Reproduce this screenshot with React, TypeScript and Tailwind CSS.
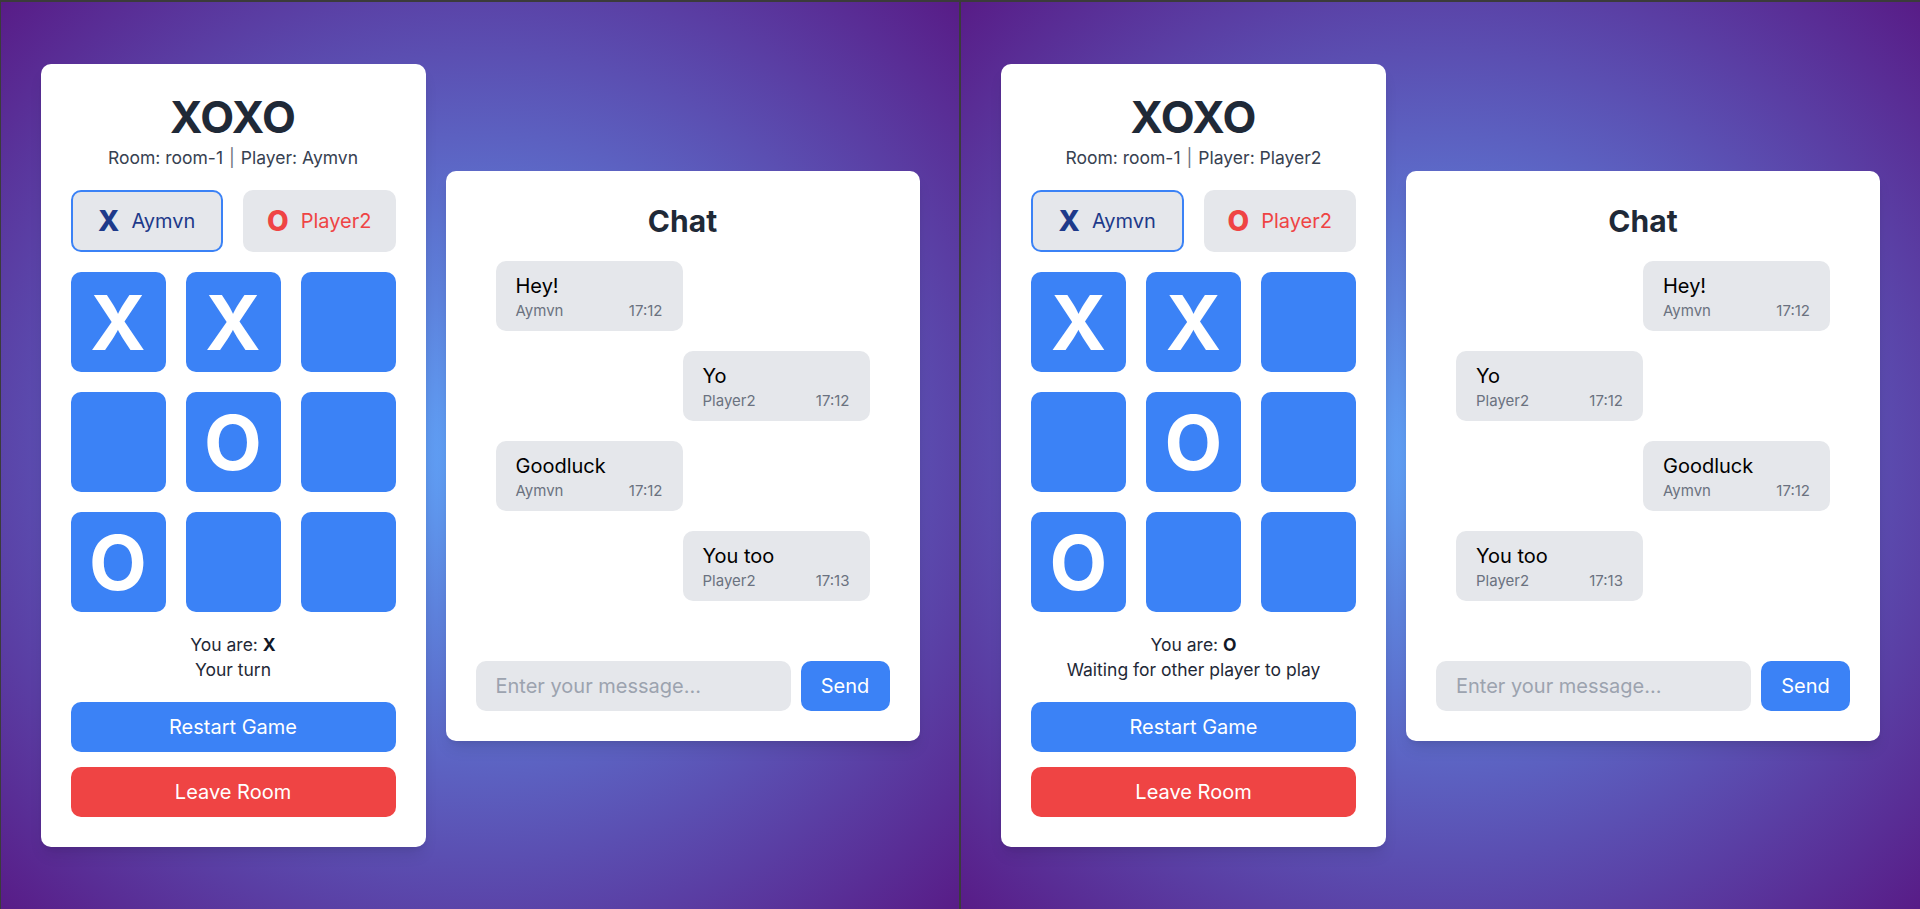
type Cell = "X" | "O" | null;

interface Message {
  author: string;
  text: string;
  time: string;
}

const board: Cell[] = ["X", "X", null, null, "O", null, "O", null, null];

const messages: Message[] = [
  { author: "Aymvn", text: "Hey!", time: "17:12" },
  { author: "Player2", text: "Yo", time: "17:12" },
  { author: "Aymvn", text: "Goodluck", time: "17:12" },
  { author: "Player2", text: "You too", time: "17:13" },
];

interface WindowProps {
  player: string;
  symbol: "X" | "O";
  status: string;
}

function GameCard({ player, symbol, status }: WindowProps) {
  return (
    <div className="w-[385px] bg-white rounded-[10px] shadow-lg p-[30px] flex flex-col">
      {/* Header */}
      <h1 className="text-[44px] leading-[46px] font-bold text-center text-[#1f2937]">XOXO</h1>
      <p className="mt-[5px] text-[17.5px] leading-[25px] text-center text-[#374151]">
        Room: room-1<span className="mx-[6px] text-[#6b7280]">|</span>Player: {player}
      </p>

      {/* Players */}
      <div className="mt-5 grid grid-cols-2 gap-5">
        <div className="h-[62px] flex items-center justify-center gap-3 bg-[#e5e7eb] rounded-[10px] border-2 border-[#3b82f6]">
          <span className="text-[28px] font-extrabold text-[#1e3a8a]">X</span>
          <span className="text-[20px] text-[#1e3a8a]">Aymvn</span>
        </div>
        <div className="h-[62px] flex items-center justify-center gap-3 bg-[#e5e7eb] rounded-[10px] border-2 border-transparent">
          <span className="text-[28px] font-extrabold text-[#ef4444]">O</span>
          <span className="text-[20px] text-[#ef4444]">Player2</span>
        </div>
      </div>

      {/* Board */}
      <div className="mt-5 grid grid-cols-3 gap-5">
        {board.map((cell, i) => (
          <div
            key={i}
            className="h-[100px] bg-[#3b82f6] rounded-[10px] flex items-center justify-center text-white text-[75px] font-bold leading-none"
          >
            {cell}
          </div>
        ))}
      </div>

      {/* Status */}
      <div className="mt-5 text-center text-[17.5px] leading-[25px] text-[#1f2937]">
        <p>
          You are: <span className="font-bold text-[#111827]">{symbol}</span>
        </p>
        <p>{status}</p>
      </div>

      <button className="mt-5 h-[50px] bg-[#3b82f6] text-white text-[20px] rounded-[10px]">Restart Game</button>
      <button className="mt-[15px] h-[50px] bg-[#ef4444] text-white text-[20px] rounded-[10px]">Leave Room</button>
    </div>
  );
}

function ChatCard({ player }: { player: string }) {
  return (
    <div className="w-[474px] bg-white rounded-[10px] shadow-lg p-[30px] flex flex-col">
      <h2 className="text-[30px] leading-[40px] font-bold text-center text-[#1f2937]">Chat</h2>
      <div className="h-[400px] p-5 flex flex-col gap-5 overflow-hidden">
        {messages.map((m, i) => (
          <div key={i} className={`flex ${m.author === player ? "justify-start" : "justify-end"}`}>
            <div className="w-1/2 bg-[#e5e7eb] rounded-[10px] px-5 py-[10px]">
              <p className="text-[20px] leading-[30px] text-black">{m.text}</p>
              <div className="flex justify-between text-[15px] leading-[20px] text-[#6b7280]">
                <span>{m.author}</span>
                <span>{m.time}</span>
              </div>
            </div>
          </div>
        ))}
      </div>
      <div className="mt-5 flex gap-[10px]">
        <input
          placeholder="Enter your message..."
          className="flex-1 min-w-0 h-[50px] bg-[#e5e7eb] rounded-[10px] px-5 text-[20px] placeholder:text-[#9ca3af] outline-none"
        />
        <button className="w-[89px] h-[50px] bg-[#3b82f6] text-white text-[20px] rounded-[10px]">Send</button>
      </div>
    </div>
  );
}

function Window(props: WindowProps & { className: string }) {
  return (
    <div
      className={`${props.className} h-full flex items-center justify-center gap-5 bg-[radial-gradient(ellipse_at_center,#60a5fa,#581c87)]`}
    >
      <GameCard {...props} />
      <ChatCard player={props.player} />
    </div>
  );
}

export default function App() {
  return (
    <div className="w-[1920px] h-[909px] flex gap-[2px] pl-px pt-[2px] bg-[#3b3b3b] overflow-hidden font-[Inter,sans-serif]">
      <Window className="w-[958px]" player="Aymvn" symbol="X" status="Your turn" />
      <Window className="flex-1" player="Player2" symbol="O" status="Waiting for other player to play" />
    </div>
  );
}
